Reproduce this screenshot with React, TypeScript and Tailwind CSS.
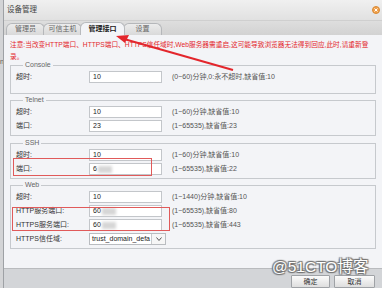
import React from "react";

const font = "[font-family:'Liberation_Sans','Noto_Sans_CJK_SC',sans-serif]";

type Row = { label: string; value: string; blur?: boolean; help: string; select?: boolean };

function Field({ row }: { row: Row }) {
  return (
    <div className="flex items-center h-[12px] mb-[2px]">
      <div className="w-[78px] pl-[5px] text-[#333] whitespace-nowrap">{row.label}</div>
      {row.select ? (
        <div className="flex w-[77px] h-[12px] border border-[#b9bcc0] bg-white">
          <div className="flex-1 pl-[2px] leading-[10px] whitespace-nowrap text-[#222]">{row.value}</div>
          <div className="w-[14px] border-l border-[#c8cacd] flex items-center justify-center bg-[#f6f6f6]">
            <svg width="6" height="4" viewBox="0 0 6 4">
              <path d="M0.5 0.5 L3 3.5 L5.5 0.5" fill="none" stroke="#555" strokeWidth="1" />
            </svg>
          </div>
        </div>
      ) : (
        <div className="flex items-center w-[73px] h-[12px] border border-[#c3c6ca] bg-white pl-[3px] text-[#222]">
          <span>{row.value}</span>
          {row.blur && <span className="ml-[1px] w-[14px] h-[7px] bg-[#d6d6d6] blur-[1.5px]" />}
        </div>
      )}
      <div className="ml-[10px] text-[#555] whitespace-nowrap">{row.help}</div>
    </div>
  );
}

function Group({ title, rows, pb, mt }: { title: string; rows: Row[]; pb: string; mt: string }) {
  return (
    <fieldset className={`border border-[#c6c9cd] mx-0 ${mt} ${pb}`}>
      <legend className="ml-[12px] px-[2px] leading-[10px] text-[#666]">{title}</legend>
      <div className="pt-[1px]">
        {rows.map((r, i) => (
          <Field key={i} row={r} />
        ))}
      </div>
    </fieldset>
  );
}

export default function App() {
  const tabs = ["管理员", "可信主机", "管理接口", "设置"];
  return (
    <div className={`relative w-[382px] h-[288px] overflow-hidden flex text-[7px] bg-[#f3f4f7] ${font}`}>
      <div className="w-[4px] bg-[#d3d4d6] border-r border-[#9ea1a5] text-[#555] pt-[57px] overflow-hidden leading-[10px]">n</div>

      <div className="flex-1 flex flex-col">
        <div className="h-[21px] flex items-center justify-between px-[3px] bg-gradient-to-b from-[#f0f0f0] to-[#e1e1e1] border-b border-[#cfcfcf]">
          <span className="text-[#444] text-[7.5px]">设备管理</span>
          <span className="w-[8px] h-[8px] rounded-full bg-[#f0a04a] border border-[#d98a36] flex items-center justify-center mr-[-1px]">
            <svg width="4" height="4" viewBox="0 0 4 4">
              <path d="M0.5 0.5 L3.5 3.5 M3.5 0.5 L0.5 3.5" stroke="#fff" strokeWidth="1" />
            </svg>
          </span>
        </div>

        <div className="h-[14px] flex items-end pl-[2px] bg-gradient-to-b from-[#dedede] to-[#d2d2d2]">
          {tabs.map((t, i) =>
            i === 2 ? (
              <div key={t} className="h-[13px] w-[45px] -ml-[2px] rounded-t-[6px] border border-b-0 border-[#b8babd] bg-[#f3f4f7] flex items-center justify-center font-bold text-[#222] z-10">
                {t}
              </div>
            ) : (
              <div key={t} className="h-[12px] w-[39px] -ml-[2px] first:ml-0 rounded-t-[6px] border border-b-0 border-[#b5b7ba] bg-gradient-to-b from-[#ececec] to-[#d9d9d9] flex items-center justify-center text-[#666]">
                {t}
              </div>
            )
          )}
        </div>

        <div className="flex-1 px-[6px] pr-[6px]">
          <p className="w-[362px] h-[25px] pt-[4px] text-[6.7px] leading-[12px] text-[#e3262c] break-all">
            注意:当改变HTTP端口、HTTPS端口、HTTPS信任域时,Web服务器需重启,这可能导致浏览器无法得到回应,此时,请重新登录。
          </p>

          <Group
            title="Console"
            mt="mt-0"
            pb="pb-[8px]"
            rows={[{ label: "超时:", value: "10", help: "(0~60)分钟,0:永不超时,缺省值:10" }]}
          />
          <Group
            title="Telnet"
            mt="mt-[1px]"
            pb="pb-[1px]"
            rows={[
              { label: "超时:", value: "10", help: "(1~60)分钟,缺省值:10" },
              { label: "端口:", value: "23", help: "(1~65535),缺省值:23" },
            ]}
          />
          <Group
            title="SSH"
            mt="mt-[2px]"
            pb="pb-[1px]"
            rows={[
              { label: "超时:", value: "10", help: "(1~60)分钟,缺省值:10" },
              { label: "端口:", value: "6", blur: true, help: "(1~65535),缺省值:22" },
            ]}
          />
          <Group
            title="Web"
            mt="mt-[1px]"
            pb="pb-[1px]"
            rows={[
              { label: "超时:", value: "10", help: "(1~1440)分钟,缺省值:10" },
              { label: "HTTP服务端口:", value: "60", blur: true, help: "(1~65535),缺省值:80" },
              { label: "HTTPS服务端口:", value: "60", blur: true, help: "(1~65535),缺省值:443" },
              { label: "HTTPS信任域:", value: "trust_domain_defa", select: true, help: "" },
            ]}
          />
        </div>

        <div className="h-[20px] flex items-center justify-end gap-[4px] pr-[7px] pt-[6px] bg-[#d3d5d8] border-t border-[#b9bbbe]">
          <button className="w-[39px] h-[13px] border border-[#9fa2a6] rounded-[1px] bg-gradient-to-b from-[#fbfbfb] to-[#dedede] text-[#333] leading-[11px]">确定</button>
          <button className="w-[41px] h-[13px] border border-[#9fa2a6] rounded-[1px] bg-gradient-to-b from-[#fbfbfb] to-[#dedede] text-[#333] leading-[11px]">取消</button>
        </div>
      </div>

      {/* annotations */}
      <div className="absolute left-[13px] top-[158px] w-[139px] h-[18px] border border-[#e05a5a]" />
      <div className="absolute left-[12px] top-[207px] w-[158px] h-[24px] border border-[#e05a5a]" />
      <svg className="absolute left-0 top-0 pointer-events-none" width="382" height="288">
        <line x1="233" y1="70" x2="124" y2="39" stroke="#e3262c" strokeWidth="2" />
        <polygon points="116,36 129,35 125,43" fill="#e3262c" />
      </svg>
      <div className="absolute left-[272px] top-[258px] text-[15.5px] leading-[18px] text-white whitespace-nowrap [text-shadow:0_0_1px_#666,1px_1px_1px_#777,-1px_-1px_1px_#777,1px_-1px_1px_#777,-1px_1px_1px_#777]">
        @51CTO博客
      </div>
    </div>
  );
}
